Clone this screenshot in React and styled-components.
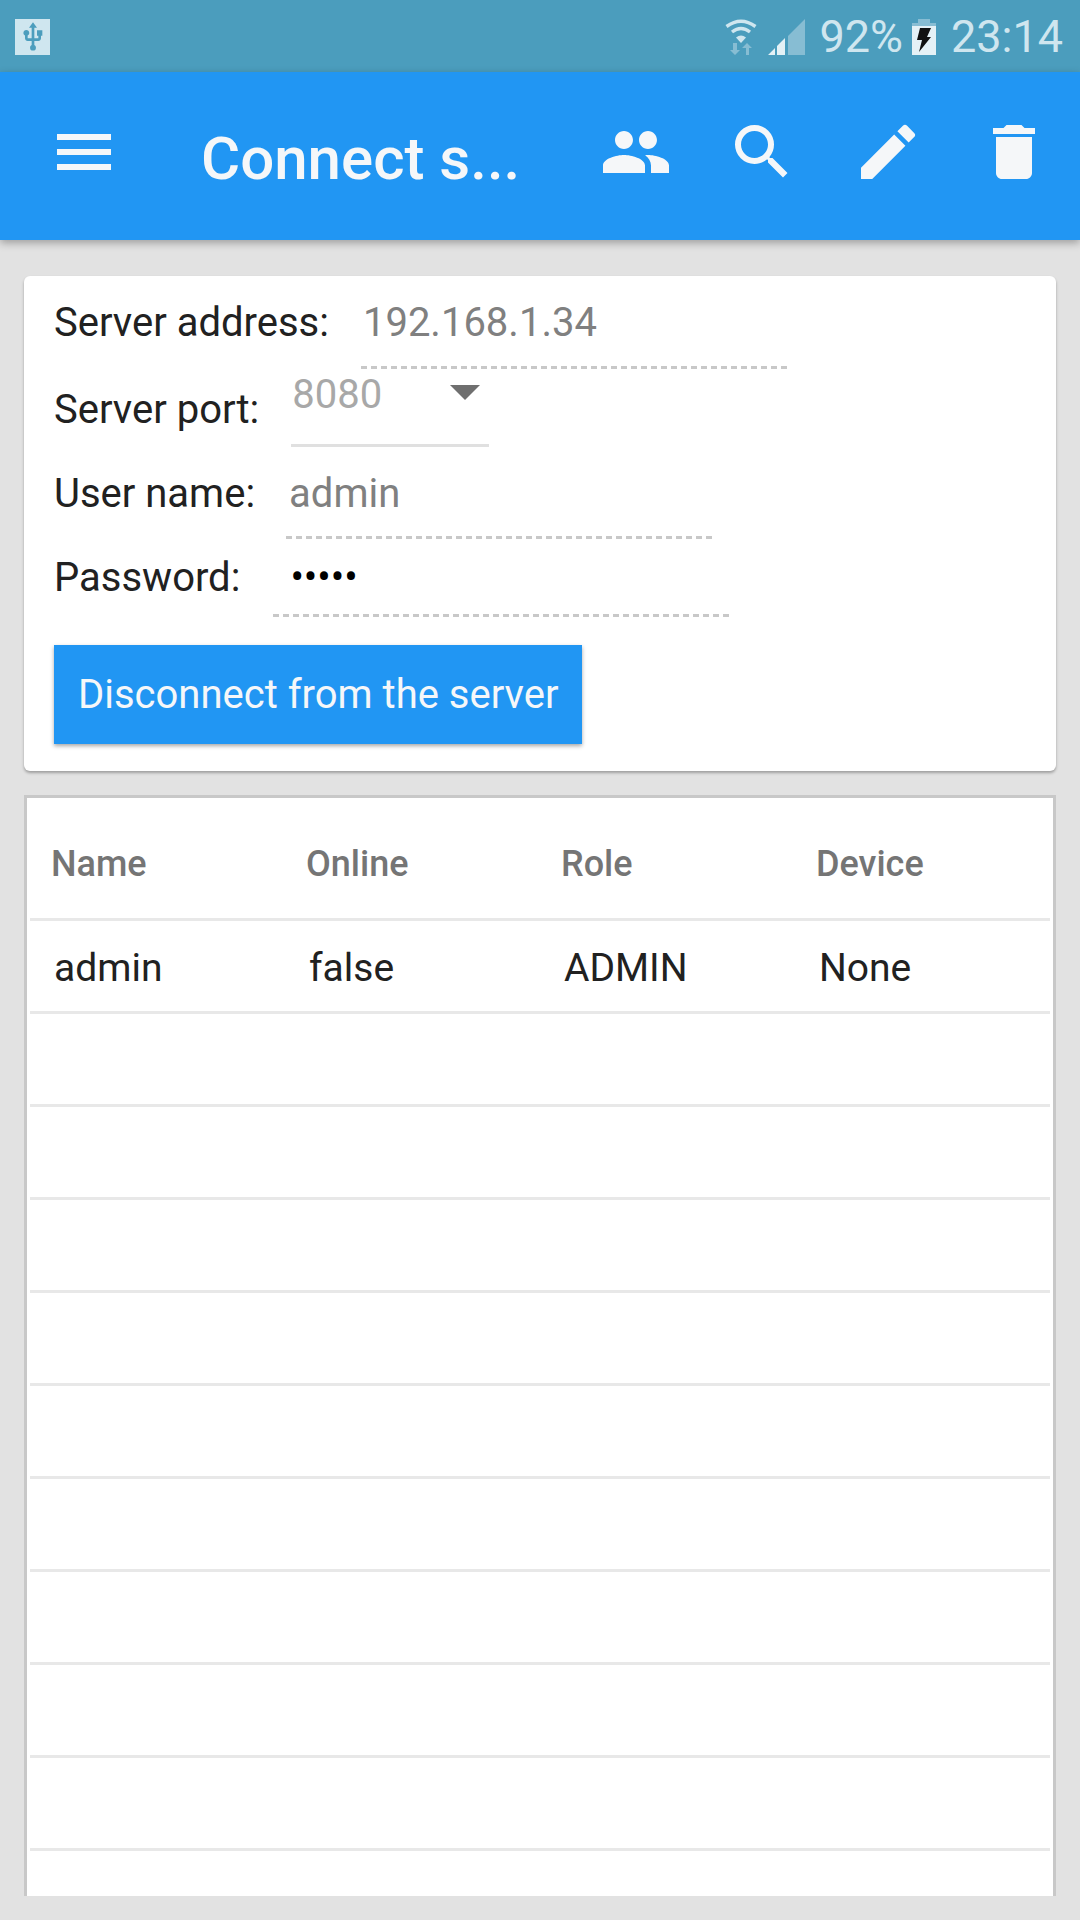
import React from "react";
import styled, { createGlobalStyle } from "styled-components";
import { MdMenu, MdPeople, MdSearch, MdEdit, MdDelete, MdUsb } from "react-icons/md";

const columns = ["Name", "Online", "Role", "Device"];
const users = [["admin", "false", "ADMIN", "None"]];
const EMPTY_ROWS = 10;

function App() {
  return (
    <Page>
      <GlobalStyle />
      <StatusBar>
        <UsbBadge>
          <MdUsb size={32} />
        </UsbBadge>
        <StatusRight>
          <svg width="32" height="36" viewBox="0 0 32 36">
            <g fill="none" stroke="#cfe6ef" strokeWidth="3.4">
              <path d="M1.5 7.5Q16 -3 30.500 7.500" />
              <path d="M7 13Q16 6 25 13" />
            </g>
            <path d="M11 18.500Q16 14.500 21 18.500L16 24Z" fill="#cfe6ef" />
            <path d="M8 24V31H5L10 36L15 31H12V24Z" fill="#87bdd3" />
            <path d="M21 36V29H17L22 24L27 29H24V36Z" fill="#87bdd3" />
          </svg>
          <SignalIcon width="37" height="36" viewBox="0 0 37 36">
            <path d="M20 17L37 0V36H20Z" fill="#87bdd3" />
            <path d="M0 36L7 29V36ZM9 27L17 19V36H9Z" fill="#e4f1f6" />
          </SignalIcon>
          <StatusText>92%</StatusText>
          <BatteryIcon width="24" height="36" viewBox="0 0 24 36">
            <path d="M6 0H18V4H24V7H0V4H6Z" fill="#87bdd3" />
            <path d="M0 7H24V36H0Z" fill="#e4f1f6" />
            <path d="M8 9H19L15 18H19L7 33L10 21H5Z" fill="#111" />
          </BatteryIcon>
          <StatusText>23:14</StatusText>
        </StatusRight>
      </StatusBar>

      <Toolbar>
        <MdMenu size={72} />
        <Title>Connect s...</Title>
        <Actions>
          <MdPeople size={72} />
          <MdSearch size={72} />
          <MdEdit size={72} />
          <MdDelete size={72} />
        </Actions>
      </Toolbar>

      <Content>
        <FormCard>
          <FormRow $height={80}>
            <Label $top={12}>Server address:</Label>
            <Field $left={32} $width={424} $inset={2} $bottom={22} $top={12}>192.168.1.34</Field>
          </FormRow>
          <FormRow $height={77}>
            <Label $top={19}>Server port:</Label>
            <Select>
              <SelectValue>8080</SelectValue>
              <Arrow />
            </Select>
          </FormRow>
          <FormRow $height={93}>
            <Label $top={26}>User name:</Label>
            <Field $left={31} $width={424} $inset={3} $bottom={21} $top={26}>admin</Field>
          </FormRow>
          <FormRow $height={78}>
            <Label $top={17}>Password:</Label>
            <Field $left={33} $width={439} $inset={17} $bottom={15} $top={17} $dark>•••••</Field>
          </FormRow>
          <Button>Disconnect from the server</Button>
        </FormCard>

        <TablePanel>
          <HeadRow>
            {columns.map((c) => (
              <HeadCell key={c}>{c}</HeadCell>
            ))}
          </HeadRow>
          {users.map((u) => (
            <Row key={u[0]}>
              {u.map((v) => (
                <Cell key={v}>{v}</Cell>
              ))}
            </Row>
          ))}
          {Array.from({ length: EMPTY_ROWS }, (_, i) => (
            <Row key={i} />
          ))}
        </TablePanel>
      </Content>
    </Page>
  );
}

export default App;

const GlobalStyle = createGlobalStyle`
  html, body {
    margin: 0;
    padding: 0;
  }
  body {
    font-family: Roboto, "Liberation Sans", sans-serif;
    background: #e2e2e2;
  }
`;

const Page = styled.div`
  width: 1080px;
  height: 1920px;
  display: flex;
  flex-direction: column;
  overflow: hidden;
  background: #e2e2e2;
`;

const StatusBar = styled.div`
  flex: none;
  height: 72px;
  box-sizing: border-box;
  padding: 0 17px 0 15px;
  display: flex;
  align-items: center;
  justify-content: space-between;
  background: #4b9dbd;
`;

const UsbBadge = styled.div`
  width: 35px;
  height: 36px;
  margin-top: 2px;
  display: flex;
  align-items: center;
  justify-content: center;
  background: #cfe6ef;
  color: #4b9dbd;
`;

const StatusRight = styled.div`
  display: flex;
  align-items: center;
  height: 36px;
  margin-top: 2px;
`;

const SignalIcon = styled.svg`
  margin-left: 11px;
  margin-right: 14px;
`;

const BatteryIcon = styled.svg`
  margin-left: 9px;
  margin-right: 15px;
`;

const StatusText = styled.span`
  font-size: 45px;
  line-height: 36px;
  color: #cfe6ef;
`;

const Toolbar = styled.div`
  flex: none;
  position: relative;
  z-index: 1;
  height: 168px;
  box-sizing: border-box;
  padding: 0 30px 8px 48px;
  display: flex;
  align-items: center;
  background: #2196f3;
  color: #f5f7f9;
  box-shadow: 0 3px 8px rgba(0, 0, 0, 0.3);
`;

const Title = styled.div`
  margin-left: 81px;
  margin-top: 13px;
  font-size: 60px;
  font-weight: 500;
`;

const Actions = styled.div`
  margin-left: auto;
  display: flex;
  gap: 54px;
`;

const Content = styled.div`
  flex: 1;
  min-height: 0;
  padding: 36px 24px 24px;
  display: flex;
  flex-direction: column;
  gap: 24px;
`;

const FormCard = styled.div`
  flex: none;
  padding: 14px 30px 27px;
  border-radius: 6px;
  background: #fff;
  box-shadow: 0 2px 3px rgba(0, 0, 0, 0.3);
`;

const FormRow = styled.div`
  display: flex;
  align-items: flex-start;
  height: ${(p) => p.$height}px;
`;

const Label = styled.div`
  padding-top: ${(p) => p.$top}px;
  font-size: 40px;
  line-height: 42px;
  color: #212121;
  white-space: nowrap;
`;

const Field = styled.div`
  width: ${(p) => p.$width}px;
  margin-left: ${(p) => p.$left}px;
  margin-top: ${(p) => p.$top}px;
  padding: 0 0 ${(p) => p.$bottom + 3}px ${(p) => p.$inset}px;
  font-size: 40px;
  line-height: 42px;
  color: ${(p) => (p.$dark ? "#000" : "#808080")};
  background: repeating-linear-gradient(90deg, #c8c8c8 0 6px, transparent 6px 10px) left bottom / 100% 3px no-repeat;
`;

const Select = styled.div`
  position: relative;
  width: 198px;
  margin-left: 32px;
  margin-top: 4px;
  padding-bottom: 28px;
  border-bottom: 3px solid #e0e0e0;
`;

const SelectValue = styled.div`
  padding-left: 1px;
  font-size: 40px;
  line-height: 42px;
  color: #a8a8a8;
`;

const Arrow = styled.div`
  position: absolute;
  left: 159px;
  top: 11px;
  border-left: 15px solid transparent;
  border-right: 15px solid transparent;
  border-top: 15px solid #6f6f6f;
`;

const Button = styled.div`
  width: 528px;
  height: 99px;
  margin-top: 27px;
  box-sizing: border-box;
  padding-left: 24px;
  display: flex;
  align-items: center;
  font-size: 40px;
  color: #f5f7f9;
  background: #2196f3;
  box-shadow: 0 2px 4px rgba(0, 0, 0, 0.35);
`;

const TablePanel = styled.div`
  flex: 1;
  min-height: 0;
  overflow: hidden;
  padding: 0 3px;
  border: 3px solid #c8c8c8;
  border-bottom: 0;
  background: #fff;
`;

const HeadRow = styled.div`
  display: grid;
  grid-template-columns: repeat(4, 1fr);
  align-items: center;
  height: 110px;
  padding-top: 10px;
  border-bottom: 3px solid #e8e8e8;
`;

const HeadCell = styled.div`
  padding-left: 21px;
  padding-top: 2px;
  font-size: 36px;
  font-weight: 500;
  color: #757575;
`;

const Row = styled.div`
  display: grid;
  grid-template-columns: repeat(4, 1fr);
  align-items: center;
  height: 90px;
  border-bottom: 3px solid #e8e8e8;
`;

const Cell = styled.div`
  padding-left: 24px;
  padding-top: 4px;
  font-size: 39px;
  color: #212121;
`;
